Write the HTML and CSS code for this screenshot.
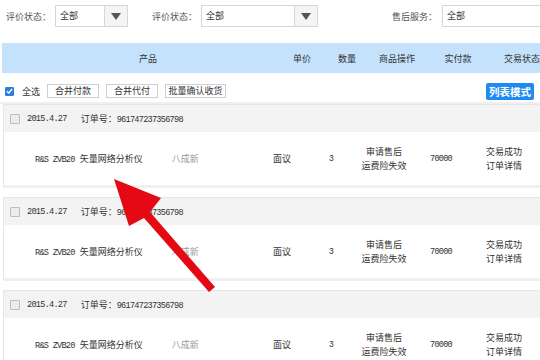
FILE: index.html
```html
<!DOCTYPE html>
<html lang="zh-CN">
<head>
  <meta charset="UTF-8">
  <title>订单列表</title>
  <link rel="stylesheet" href="styles.css">
</head>
<body>
  <div class="page">

    <div class="filters">
      <label class="filter-label">评价状态：</label>
      <div class="select small">
        <span class="select-text">全部</span>
        <span class="select-btn"><i class="tri"></i></span>
      </div>
      <label class="filter-label second">评价状态：</label>
      <div class="select wide">
        <span class="select-text">全部</span>
        <span class="select-btn"><i class="tri"></i></span>
      </div>
      <label class="filter-label third">售后服务：</label>
      <div class="select input">
        <span class="select-text">全部</span>
      </div>
    </div>

    <div class="table-head">
      <div class="th th-product">产品</div>
      <div class="th">单价</div>
      <div class="th">数量</div>
      <div class="th">商品操作</div>
      <div class="th">实付款</div>
      <div class="th">交易状态</div>
    </div>

    <div class="actions">
      <span class="check checked">
        <svg width="8" height="8" viewBox="0 0 8 8"><path d="M1 4.2 L3.2 6.3 L7 1.5" fill="none" stroke="#fff" stroke-width="1.6"/></svg>
      </span>
      <span class="all">全选</span>
      <button class="btn btn-pay">合并付款</button>
      <button class="btn btn-agent">合并代付</button>
      <button class="btn btn-confirm">批量确认收货</button>
      <button class="mode-btn">列表模式</button>
    </div>

    <div class="orders" id="orders"></div>

    <svg class="pointer" width="540" height="360" viewBox="0 0 540 360">
      <polygon points="114,179 161,198 150,212 215,287 209,292 144,218 129,226" fill="#e50914"/>
    </svg>
  </div>

  <script>
    const ordersEl = document.getElementById('orders');

    for (let i = 0; i < 3; i++) {
      const order = document.createElement('div');
      order.className = 'order';
      order.innerHTML = `
        <div class="order-head">
          <span class="check"></span>
          <span class="date mono">2015.4.27</span>
          <span class="order-no">订单号：<span class="mono">961747237356798</span></span>
        </div>
        <div class="order-body">
          <div class="td td-product">
            <span class="mono model">R&amp;S ZVB20</span>
            <span class="name">矢量网络分析仪</span>
            <span class="cond">八成新</span>
          </div>
          <div class="td">面议</div>
          <div class="td mono">3</div>
          <div class="td lines"><span>审请售后</span><span>运费险失效</span></div>
          <div class="td mono">70000</div>
          <div class="td lines"><span>交易成功</span><span>订单详情</span></div>
        </div>`;
      ordersEl.appendChild(order);
    }
  </script>
</body>
</html>
```

FILE: styles.css
```css
* {
  box-sizing: border-box;
}

html, body {
  margin: 0;
  padding: 0;
  overflow: hidden;
}

body {
  font-family: "Noto Sans CJK SC", "Liberation Sans", sans-serif;
  font-size: 9px;
  color: #333;
  background: #fff;
  width: 540px;
  height: 360px;
}

.page {
  position: relative;
  width: 560px;
}

.mono {
  font-family: "Liberation Mono", "Noto Sans CJK SC", monospace;
  font-size: 8.6px;
  letter-spacing: -0.75px;
}

/* filters */
.filters {
  display: flex;
  align-items: center;
  height: 32px;
  padding: 0 0 0 6px;
}

.filter-label {
  color: #555;
  width: 49px;
}

.filter-label.second {
  margin-left: 24px;
}

.filter-label.third {
  margin-left: 74px;
  width: 50px;
}

.select {
  display: flex;
  height: 22px;
  border: 1px solid #d6d6d6;
  background: #fff;
}

.select.small {
  width: 73px;
}

.select.wide {
  width: 117px;
}

.select.input {
  width: 110px;
}

.select-text {
  flex: 1;
  padding-left: 4px;
  line-height: 20px;
}

.select-btn {
  width: 23px;
  border-left: 1px solid #d6d6d6;
  background: #f4f4f4;
  display: flex;
  align-items: center;
  justify-content: center;
}

.tri {
  width: 0;
  height: 0;
  border-left: 5px solid transparent;
  border-right: 5px solid transparent;
  border-top: 7px solid #555;
}

/* table head */
.table-head {
  display: grid;
  grid-template-columns: 278px 44px 46px 54px 68px 60px;
  margin: 11px 0 0 2px;
  height: 30px;
  background: #c4e2fb;
  align-items: center;
  color: #333;
}

.th {
  text-align: center;
}

.th-product {
  padding-left: 14px;
}

/* actions */
.actions {
  display: flex;
  align-items: center;
  height: 18px;
  margin-top: 9px;
  padding-left: 5px;
}

.check {
  display: inline-flex;
  align-items: center;
  justify-content: center;
  width: 9px;
  height: 9px;
  border: 1px solid #bdbdbd;
  background: #ececec;
  border-radius: 1px;
}

.check.checked {
  background: #2b7fd8;
  border-color: #2b7fd8;
}

.all {
  margin-left: 8px;
  margin-right: 7px;
}

.btn {
  font-family: inherit;
  font-size: 9px;
  color: #333;
  height: 14px;
  padding: 0;
  margin-right: 7px;
  background: #fff;
  border: 1px solid #cfcfcf;
  line-height: 12px;
  white-space: nowrap;
  text-align: center;
}

.btn-pay {
  width: 52px;
}

.btn-agent {
  width: 52px;
}

.btn-confirm {
  width: 61px;
}

.mode-btn {
  font-family: inherit;
  font-size: 10.5px;
  font-weight: bold;
  color: #fff;
  background: #1f8af0;
  border: none;
  border-radius: 2px;
  height: 17px;
  width: 48px;
  padding: 0;
  margin-left: auto;
  margin-right: 26px;
}

/* orders */
.orders {
  border-top: 2px solid #efefef;
  margin-top: 2px;
}

.order {
  margin: 0 0 9px 3px;
  border: 1px solid #e6e6e6;
  border-bottom: 3px solid #f0f0f0;
}

.order-head {
  display: flex;
  align-items: center;
  height: 27px;
  background: #f3f3f3;
  padding-left: 6px;
}

.order-head .check {
  width: 10px;
  height: 10px;
}

.date {
  margin-left: 7px;
}

.order-no {
  margin-left: 14px;
}

.order-body {
  display: grid;
  grid-template-columns: 257px 42px 56px 50px 64px 62px;
  align-items: center;
  height: 53px;
  background: #fff;
}

.td {
  text-align: center;
}

.td-product {
  text-align: left;
  padding-left: 31px;
}

.model {
  margin-right: 3px;
}

.cond {
  color: #999;
  margin-left: 27px;
}

.lines {
  display: flex;
  flex-direction: column;
  line-height: 14px;
}

.pointer {
  position: absolute;
  left: 0;
  top: 0;
  pointer-events: none;
}
```
